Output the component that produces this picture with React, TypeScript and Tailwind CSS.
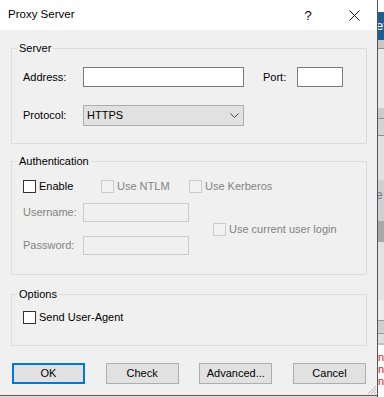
import React from "react";

function Box({ disabled }: { disabled?: boolean }) {
  return disabled ? (
    <span className="block w-[13px] h-[13px] flex-none border border-[#cccccc] bg-[#f2f2f2]" />
  ) : (
    <span className="block w-[13px] h-[13px] flex-none border border-[#333333] bg-white" />
  );
}

function Check({ label, disabled, className }: { label: string; disabled?: boolean; className?: string }) {
  return (
    <div className={`flex items-center gap-[3px] h-[13px] ${className ?? ""}`}>
      <Box disabled={disabled} />
      <span className={disabled ? "text-[#838383] leading-[13px]" : "text-black leading-[13px]"}>{label}</span>
    </div>
  );
}

function Group({ title, className, children }: { title: string; className?: string; children: React.ReactNode }) {
  return (
    <div className={`relative border border-[#dcdcdc] ${className ?? ""}`}>
      <span className="absolute left-[5px] top-[-8px] px-[2px] bg-[#f0f0f0] leading-[14px] text-black">{title}</span>
      {children}
    </div>
  );
}

function Button({ label, primary }: { label: string; primary?: boolean }) {
  return primary ? (
    <div className="w-[73px] h-[21px] flex items-center justify-center bg-[#e1e1e1] border-2 border-[#0078d7] text-black">
      {label}
    </div>
  ) : (
    <div className="w-[73px] h-[21px] flex items-center justify-center bg-[#e1e1e1] border border-[#adadad] text-black">
      {label}
    </div>
  );
}

export default function App() {
  return (
    <div className="w-[384px] h-[397px] flex overflow-hidden bg-white font-['Liberation_Sans',Arial,sans-serif] text-[11px]">
      <div className="w-[377px] h-[397px] flex flex-col flex-none">
        <div className="w-[377px] h-[395px] flex flex-col bg-[#f0f0f0] relative">
          {/* Title bar */}
          <div className="h-[30px] flex-none bg-white flex items-center text-black">
            <span className="pl-[8px] flex-1 text-[11.5px]">Proxy Server</span>
            <span className="w-[46px] text-center text-[13px] leading-[13px] ml-[0px]">?</span>
            <span className="w-[46px] flex items-center justify-center">
              <svg width="11" height="11" viewBox="0 0 11 11">
                <path d="M0.5 0.5 L10.5 10.5 M10.5 0.5 L0.5 10.5" stroke="#111" strokeWidth="1" fill="none" />
              </svg>
            </span>
          </div>

          <div className="pl-[11px] pr-[10px] flex flex-col">
            {/* Server */}
            <Group title="Server" className="mt-[18px] pt-[18px] pb-[17px] pl-[11px]">
              <div className="flex items-center h-[20px]">
                <span className="w-[60px]">Address:</span>
                <div className="w-[161px] h-[20px] border border-[#7a7a7a] bg-white" />
                <span className="ml-[19px] w-[34px]">Port:</span>
                <div className="w-[46px] h-[20px] border border-[#7a7a7a] bg-white" />
              </div>
              <div className="flex items-center h-[21px] mt-[18px]">
                <span className="w-[60px]">Protocol:</span>
                <div className="w-[161px] h-[21px] border border-[#adadad] bg-[#e1e1e1] flex items-center pl-[3px] pr-[4px]">
                  <span className="flex-1">HTTPS</span>
                  <svg width="9" height="5" viewBox="0 0 9 5">
                    <path d="M0.5 0.5 L4.5 4.5 L8.5 0.5" stroke="#444" strokeWidth="1" fill="none" />
                  </svg>
                </div>
              </div>
            </Group>

            {/* Authentication */}
            <Group title="Authentication" className="mt-[17px] pt-[18px] pb-[19px] pl-[11px]">
              <div className="flex items-center h-[13px]">
                <Check label="Enable" className="w-[78px]" />
                <Check label="Use NTLM" disabled className="w-[88px]" />
                <Check label="Use Kerberos" disabled />
              </div>
              <div className="flex mt-[10px]">
                <div className="flex flex-col">
                  <div className="flex items-center h-[19px]">
                    <span className="w-[60px] text-[#838383]">Username:</span>
                    <div className="w-[106px] h-[19px] border border-[#cccccc] bg-[#f0f0f0]" />
                  </div>
                  <div className="flex items-center h-[19px] mt-[14px]">
                    <span className="w-[60px] text-[#838383]">Password:</span>
                    <div className="w-[106px] h-[19px] border border-[#cccccc] bg-[#f0f0f0]" />
                  </div>
                </div>
                <Check label="Use current user login" disabled className="ml-[24px] self-center mt-[1px]" />
              </div>
            </Group>

            {/* Options */}
            <Group title="Options" className="mt-[19px] pt-[16px] pb-[21px] pl-[11px]">
              <Check label="Send User-Agent" />
            </Group>

            {/* Buttons */}
            <div className="mt-[17px] mx-[1px] flex justify-between">
              <Button label="OK" primary />
              <Button label="Check" />
              <Button label="Advanced..." />
              <Button label="Cancel" />
            </div>
          </div>

          {/* resize grip */}
          <svg className="absolute right-0 bottom-0" width="11" height="11" viewBox="0 0 11 11">
            <path d="M10 2 L2 10 M10 5 L5 10 M10 8 L8 10" stroke="#b8b8b8" strokeWidth="1" fill="none" />
          </svg>
        </div>
        <div className="h-[1px] bg-[#6b5050]" />
        <div className="h-[1px] bg-[#e6dede]" />
      </div>

      {/* background strip */}
      <div className="w-[7px] h-[397px] flex-none flex flex-col border-l border-[#555555] overflow-hidden">
        <div className="h-[12px] bg-white" />
        <div className="h-[28px] bg-[#1d5d91] text-white text-[13px] leading-[28px] overflow-hidden whitespace-nowrap">
          <span className="ml-[-2px]">ef</span>
        </div>
        <div className="h-[8px] bg-[#c6c6c6]" />
        <div className="h-[1px] bg-[#8f8f8f]" />
        <div className="h-[59px] bg-[#e8e8e8]" />
        <div className="h-[10px] bg-[#cbcbcb]" />
        <div className="h-[1px] bg-[#8f8f8f]" />
        <div className="h-[16px] bg-[#d3d3d3]" />
        <div className="h-[1px] bg-[#8f8f8f]" />
        <div className="h-[44px] bg-[#e1e1e1]" />
        <div className="h-[41px] bg-[#d0d0d0] text-[#777] text-[12px] leading-[30px] overflow-hidden whitespace-nowrap">
          <span className="ml-[-2px]">e</span>
        </div>
        <div className="h-[21px] bg-[#a9a9a9]" />
        <div className="h-[58px] bg-[#e3e3e3]" />
        <div className="h-[20px] bg-[#ececec]" />
        <div className="h-[1px] bg-[#999999]" />
        <div className="h-[12px] bg-[#d0d0d0]" />
        <div className="h-[1px] bg-[#999999]" />
        <div className="h-[9px] bg-[#dedede]" />
        <div className="h-[2px] bg-[#c0c0c0]" />
        <div className="h-[52px] bg-white text-[#d02020] text-[11px] leading-[12px] pt-[6px] overflow-hidden whitespace-nowrap">
          <div>n</div>
          <div>n</div>
          <div>n</div>
        </div>
      </div>
    </div>
  );
}
